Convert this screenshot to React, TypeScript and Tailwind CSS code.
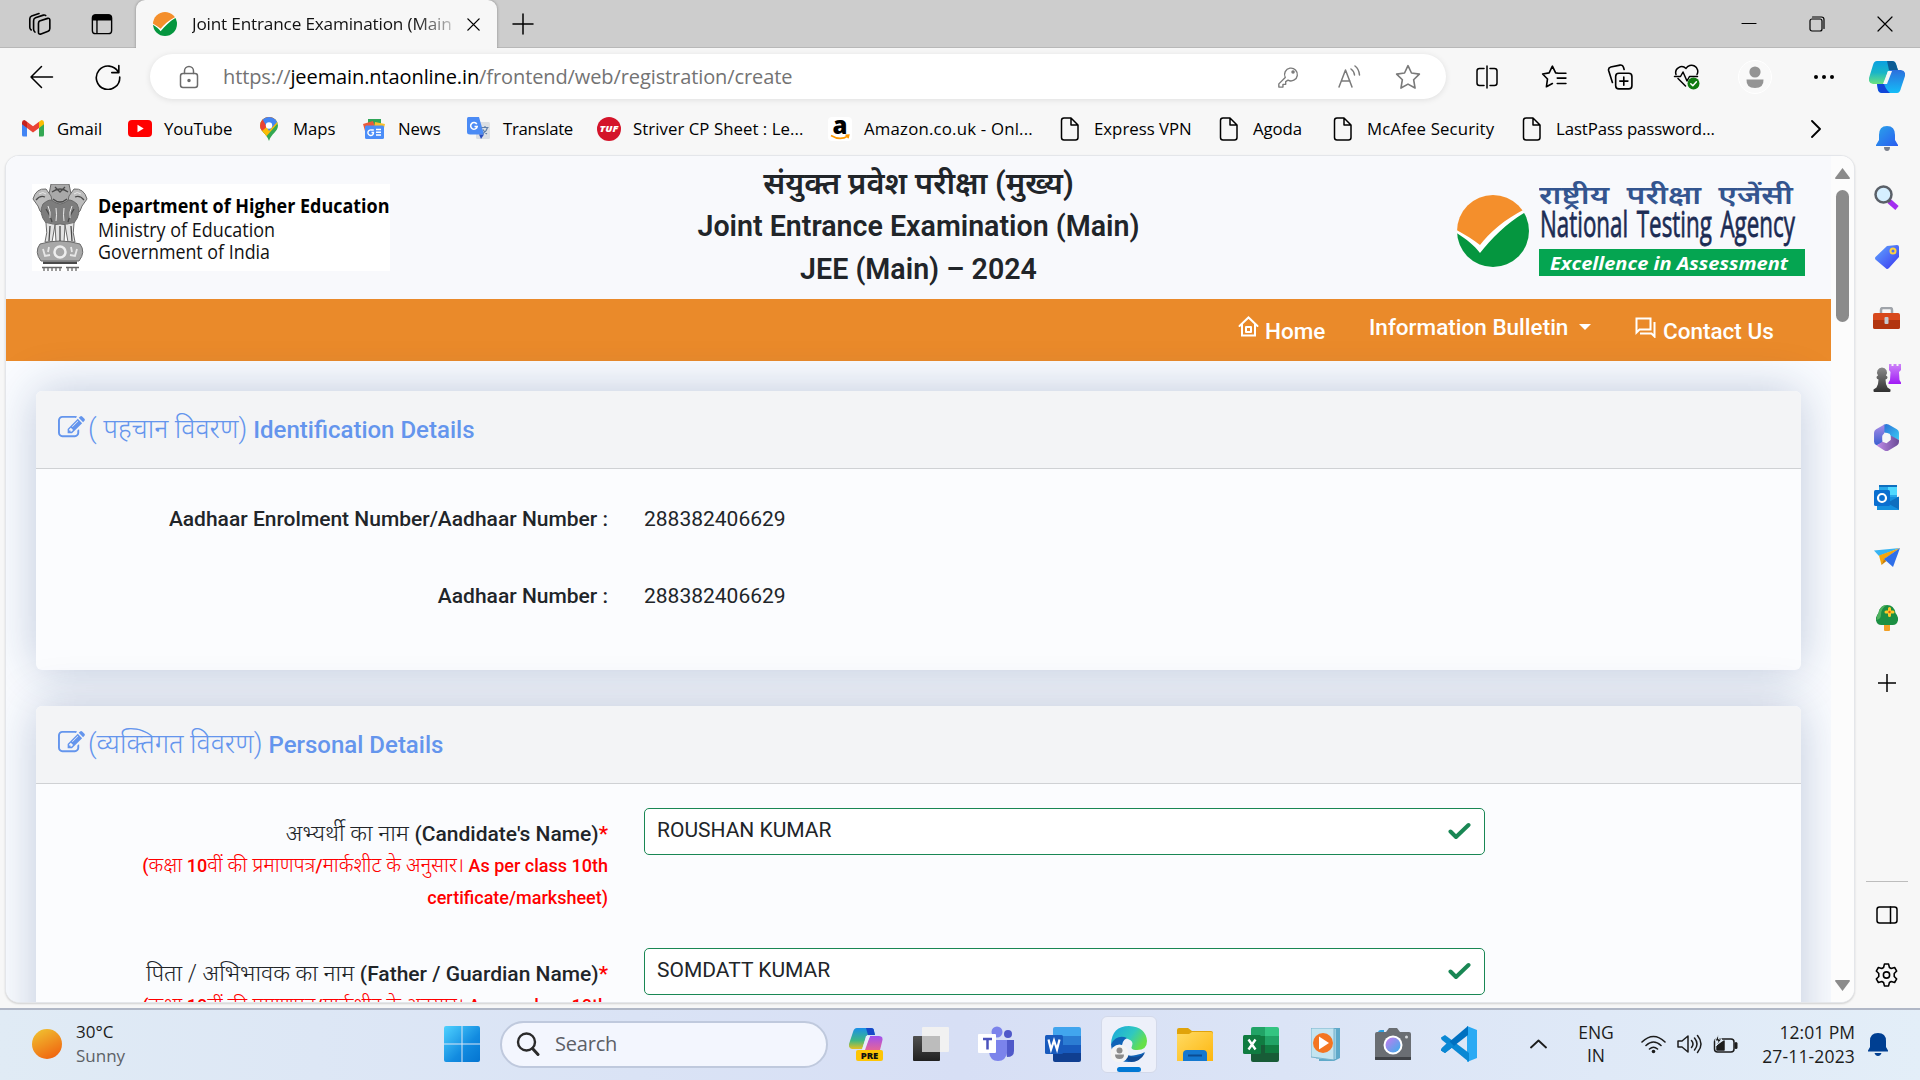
import React from "react";

type IconProps = { w?: number; h?: number; vb?: string; className?: string; children: React.ReactNode };

/* Outline icon: strokes follow the text colour class. */
function Line({ w = 24, h = 24, vb = "0 0 24 24", className = "", children }: IconProps) {
  return (
    <svg width={w} height={h} viewBox={vb} className={"shrink-0 " + className} fill="none" stroke="currentColor" strokeWidth="1.5" strokeLinecap="round" strokeLinejoin="round">
      {children}
    </svg>
  );
}

/* Multi-colour icon. */
function Art({ w = 24, h = 24, vb = "0 0 24 24", className = "", children }: IconProps) {
  return (
    <svg width={w} height={h} viewBox={vb} className={"shrink-0 " + className}>
      {children}
    </svg>
  );
}

function Cell({ className, children }: { className: string; children: React.ReactNode }) {
  return <div className={"flex shrink-0 items-center justify-center " + className}>{children}</div>;
}

function NtaMark({ size }: { size: number }) {
  return (
    <Art w={size} h={size} vb="0 0 72 72">
      <clipPath id="ntaClip"><circle cx="36" cy="36" r="36" /></clipPath>
      <g clipPath="url(#ntaClip)">
        <rect width="72" height="72" fill="#fff" />
        <path d="M-2 34C8 40 16 44 23 50C32 38 48 24 68 14L60 -2H-2Z" fill="#f48f2c" />
        <path d="M-2 37C8 43 17 50 23 58C34 44 50 28 67 18L80 20V76H-2Z" fill="#05963f" />
      </g>
    </Art>
  );
}

function TabStrip() {
  return (
    <div className="flex h-12 shrink-0 bg-[#cdcdcd] shadow-[inset_0_-1px_0_#b8b8b8]">
      <Cell className="w-[78px]">
        <Line w={26} h={26} className="text-black">
          <path d="M12.500 9.200l7.500-2.400q2-.4 2 1.600v7.800q0 1.800-1.600 2.400l-6.500 2.600q-2.400.7-2.400-1.600v-8q0-1.800 1-2.400z" />
          <path d="M8.300 19.500q-1.300-.8-1.300-2.600V9q0-2 1.700-2.700L16 3.800q1.400-.4 2.200.4" />
          <path d="M4.800 17.500q-1.300-.8-1.300-2.600V7.300q0-2 1.700-2.700L12 2.300" />
        </Line>
      </Cell>
      <Cell className="w-[48px]">
        <Line w={22} h={22} className="text-black">
          <rect x="1.500" y="2" width="21" height="20.500" rx="3.500" />
          <path d="M2 4q1-2 3-2h14q2 0 3 2v3.500H2z" fill="currentColor" />
          <path d="M6.500 8v14" />
        </Line>
      </Cell>
      <div className="ml-[10px] flex h-12 w-[361px] items-center rounded-t-[9px] bg-[#f7f7f7] pl-[17px] shadow-[0_0_3px_rgba(0,0,0,0.35)] [clip-path:inset(0_-4px_0_-4px)]">
        <NtaMark size={24} />
        <div className="ml-[15px] w-[262px] whitespace-nowrap bg-linear-to-r from-[#111] from-85% to-[#11111130] bg-clip-text font-['Open_Sans'] text-[17.2px] tracking-[-0.18px] text-transparent">
          Joint Entrance Examination (Main
        </div>
        <Line w={15} h={15} vb="0 0 16 16" className="ml-[12px] text-black"><path d="M2 2l12 12M14 2L2 14" /></Line>
      </div>
      <Cell className="ml-[12px] w-[28px]">
        <Line w={22} h={22} vb="0 0 22 22" className="text-black"><path d="M11 1v20M1 11h20" /></Line>
      </Cell>
      <div className="flex-1" />
      <Cell className="w-[68px]"><Line w={16} h={16} vb="0 0 16 16" className="text-black"><path d="M1 7.500h14" strokeWidth="1.200" /></Line></Cell>
      <Cell className="w-[68px]">
        <Line w={16} h={16} vb="0 0 16 16" className="text-black"><rect x="1" y="3" width="12" height="12" rx="2" strokeWidth="1.200" /><path d="M3.500 1h9q2.500 0 2.500 2.500v9" strokeWidth="1.200" /></Line>
      </Cell>
      <Cell className="mr-[1px] w-[68px]"><Line w={16} h={16} vb="0 0 16 16" className="text-black"><path d="M1 1l14 14M15 1L1 15" strokeWidth="1.200" /></Line></Cell>
    </div>
  );
}

function CopilotIcon() {
  return (
    <Art w={36} h={34} vb="0 0 36 34">
      <defs>
        <linearGradient id="cpA" x1="0" y1="0" x2="0" y2="1"><stop offset="0" stopColor="#0aa0e0" /><stop offset="0.5" stopColor="#19b5c8" /><stop offset="1" stopColor="#6be27e" /></linearGradient>
        <linearGradient id="cpB" x1="0" y1="0" x2="0" y2="1"><stop offset="0" stopColor="#2c6fdc" /><stop offset="1" stopColor="#14bdf8" /></linearGradient>
      </defs>
      <path d="M8 1h15q3 0 4 3l2 7h-6l-4 0-4 13H4q-5-1-4-6L4 5q1-4 4-4z" fill="url(#cpA)" />
      <path d="M18 1h5q3 0 4 3l2 6h-9z" fill="#0d5c94" />
      <path d="M28 33H13q-3 0-4-3l-1-6h9l4-14h11q5 1 4 6l-4 12q-1 5-4 5z" fill="url(#cpB)" />
      <path d="M18 33h-5q-3 0-4-3l-1-6h7q2 6 6 9z" fill="#1246d8" />
      <path d="M19 11h4l-5 13h-4z" fill="#f7f7f7" />
    </Art>
  );
}

function Toolbar() {
  return (
    <div className="flex h-[58px] shrink-0 items-center bg-[#f7f7f7] pb-[1px]">
      <Cell className="ml-[17px] w-[49px]"><Line w={25} h={24} className="text-black"><path d="M23 12H1.500M12 1.500L1.500 12 12 22.500" /></Line></Cell>
      <Cell className="ml-[17px] w-[50px]"><Line w={26} h={26} className="text-black"><path d="M21.500 7.500A10.800 10.800 0 1 0 22.800 12M22 1.500V8h-6.500" /></Line></Cell>
      <div className="ml-[17px] flex h-[45px] w-[1296px] items-center rounded-full bg-white shadow-[0_1px_6px_rgba(0,0,0,0.10)]">
        <Cell className="ml-[26px] w-[26px]">
          <Line w={20} h={24} vb="0 0 20 24" className="text-[#6b6b6b]"><rect x="1.500" y="8.500" width="17" height="14" rx="2.500" /><path d="M5.500 8.500V6a4.500 4.500 0 0 1 9 0v2.500" /><circle cx="10" cy="15.500" r="1" fill="currentColor" /></Line>
        </Cell>
        <div className="ml-[21px] flex-1 whitespace-nowrap font-['Open_Sans'] text-[20px] tracking-[-0.1px] text-[#737373]">
          https://<span className="text-black">jeemain.ntaonline.in</span>/frontend/web/registration/create
        </div>
        <div className="flex w-[202px] text-[#7a7a7a]">
          <Cell className="ml-[31px] w-[26px]"><Line w={22} h={22}><path d="M9 12.500L2 19.500v3.500h4.500v-3h3v-3l2.500-1.500A7 7 0 1 0 9 12.500z" /><circle cx="17.500" cy="6.500" r="1.200" fill="currentColor" /></Line></Cell>
          <Cell className="ml-[34px] w-[28px]"><Line w={24} h={24}><path d="M2 22L8.500 5 15 22M4.500 16h8.500M14 4q3 2 3.500 6M18 1q4 3 4.500 9" /></Line></Cell>
          <Cell className="ml-[32px] w-[26px]"><Line w={26} h={26}><path d="M12 1.500l3.200 6.800 7.300 1-5.300 5.200 1.300 7.700L12 18.600l-6.500 3.600 1.300-7.700L1.500 9.300l7.300-1z" /></Line></Cell>
        </div>
      </div>
      <Cell className="ml-[27px] w-[28px] text-black"><Line w={24} h={24}><path d="M9 3.500H4.500q-2.500 0-2.500 2.500v12q0 2.500 2.500 2.500H9M15 3.500h4.500q2.500 0 2.500 2.500v12q0 2.500-2.500 2.500H15M12 1v22" /></Line></Cell>
      <Cell className="ml-[39px] w-[28px] text-black"><Line w={26} h={26}><path d="M16 8.500l-2.500-.3L10.500 2 7.500 8.200l-6 1 4.500 4.600L5 21l5.500-3M16 8.500h7M15 13h8M15 18h8" /></Line></Cell>
      <Cell className="ml-[38px] w-[28px] text-black"><Line w={26} h={26}><rect x="8" y="8.500" width="15" height="14.500" rx="3" /><path d="M15.500 12v7.500M11.800 15.800h7.500M5 17L1.500 6q-.5-2.500 2-3.200L12 1q2.500-.5 3.200 2l.6 2" /></Line></Cell>
      <Cell className="ml-[38px] w-[28px] text-black">
        <Line w={27} h={26} vb="0 0 27 26"><path d="M3 10.500A6 6 0 0 1 13 4.500a6 6 0 0 1 11 6M12.500 22L5 14.500M1.500 12.500h6l2.500-4.500 4 9 2.500-4.500h8" /><circle cx="20.500" cy="19.500" r="6" fill="#0f7b0f" stroke="none" /><path d="M17.800 19.800l2 1.900 3.600-4" stroke="#fff" /></Line>
      </Cell>
      <Cell className="ml-[38px] w-[34px]">
        <Art w={34} h={34} vb="0 0 34 34"><circle cx="17" cy="17" r="16.500" fill="#f9f9f9" stroke="#fff" /><circle cx="17" cy="12" r="5.600" fill="#949494" /><path d="M8.500 19.500h17q.500 8.500-8.500 8.500t-8.500-8.500z" fill="#949494" /></Art>
      </Cell>
      <Cell className="ml-[40px] w-[24px]"><Art w={22} h={6} vb="0 0 22 6"><circle cx="3" cy="3" r="2" /><circle cx="11" cy="3" r="2" /><circle cx="19" cy="3" r="2" /></Art></Cell>
      <Cell className="ml-[33px] w-[36px]"><CopilotIcon /></Cell>
    </div>
  );
}

const doc = (
  <Line w={20} h={24} vb="0 0 20 24" className="text-black"><path d="M4 1h7l7 7v12.500q0 2.500-2.500 2.500H4q-2.500 0-2.500-2.500v-17Q1.500 1 4 1zM11 1.500V8h6.500" /></Line>
);
const gmail = (
  <Art w={22} h={17} vb="0 0 22 17"><path d="M0 2.500V15q0 1.500 1.500 1.500H5v-9z" fill="#4285f4" /><path d="M22 2.500V15q0 1.500-1.500 1.500H17v-9z" fill="#34a853" /><path d="M5 1.800V8l6 4.500L17 8V1.800L11 6.200z" fill="#ea4335" /><path d="M0 2.500Q0 0 2.200 0 3 0 5 1.800V8L0 4.200z" fill="#c5221f" /><path d="M22 2.500Q22 0 19.800 0 19 0 17 1.800V8l5-3.800z" fill="#fbbc04" /></Art>
);
const youtube = (
  <Art w={24} h={17} vb="0 0 24 17"><rect width="24" height="17" rx="4" fill="#f00" /><path d="M9.500 4.800v7.400l6.200-3.700z" fill="#fff" /></Art>
);
const maps = (
  <Art w={18} h={24} vb="0 0 18 24">
    <clipPath id="pin"><path d="M9 0a9 8.600 0 0 1 9 8.600c0 6-6.500 8-9 15.400C6.500 16.600 0 14.600 0 8.600A9 8.600 0 0 1 9 0z" /></clipPath>
    <g clipPath="url(#pin)"><rect width="18" height="24" fill="#34a853" /><path d="M18 6L4 22-4 14V0h22z" fill="#fbbc04" /><path d="M0 0h18L2 14-2 12z" fill="#ea4335" /><path d="M2 0h16v4L9 14 3.500 4z" fill="#4285f4" /></g>
    <circle cx="9" cy="8.500" r="3.200" fill="#fff" />
  </Art>
);
const news = (
  <Art w={23} h={20} vb="0 0 23 20"><path d="M5 0h13v8H5z" fill="#2fa557" /><path d="M0 5l10-3 2 6-10 4z" fill="#ea5b3a" /><path d="M12 3l10 2-2 8-9-3z" fill="#fbc02d" /><rect x="2" y="6.500" width="19" height="13.500" rx="1.500" fill="#4b8df8" /><path d="M10.800 11H8.500A2.800 2.800 0 1 0 10.500 13.500H8.500" stroke="#fff" fill="none" strokeWidth="1.400" /><path d="M13 10.500h5M13 13.200h5M13 16h5" stroke="#fff" strokeWidth="1.400" /></Art>
);
const translate = (
  <Art w={24} h={24}><rect x="9" y="5" width="14" height="17" rx="1.500" fill="#dcdfe3" /><path d="M1.500 0H12l5 17.500H3Q0 17.500 0 15V1.500Q0 0 1.500 0z" fill="#4b8bf5" /><path d="M12 17.500h5l-3 4.500z" fill="#2a4fbf" /><path d="M9.800 7.200A3.300 3.300 0 1 0 10.200 9.500H7.500" stroke="#fff" fill="none" strokeWidth="1.500" /><path d="M14.500 10.500h7M18 9v1.500M20.500 10.500q-1 4-4.500 6M16 12.500q1.500 3 4 4.500" stroke="#5f7ea8" fill="none" strokeWidth="1.200" /></Art>
);
const tuf = (
  <Art w={24} h={24}><circle cx="12" cy="12" r="12" fill="#d4142a" /><text x="12" y="15" textAnchor="middle" textLength="19" lengthAdjust="spacingAndGlyphs" fontFamily="Open Sans" fontStyle="italic" fontWeight="800" fontSize="8" fill="#fff">TUF</text></Art>
);
const amazon = (
  <Art w={24} h={24}><rect width="24" height="24" rx="4" fill="#fff" /><text x="12" y="16.500" textAnchor="middle" fontFamily="Open Sans" fontWeight="800" fontSize="24" fill="#000">a</text><path d="M3 18.500q9 5.500 17 .5M17.500 18.300l3.300-.3-.8 3.200" stroke="#f90" strokeWidth="1.500" fill="none" /></Art>
);

function Bookmark({ className, icon, children }: { className: string; icon: React.ReactNode; children: React.ReactNode }) {
  return (
    <div className={"flex shrink-0 items-center " + className}>
      <Cell className="w-6">{icon}</Cell>
      <span className="ml-3 whitespace-nowrap">{children}</span>
    </div>
  );
}

function Bookmarks() {
  return (
    <div className="flex h-[49px] shrink-0 items-center pb-[4px] pl-[21px] font-['Open_Sans'] text-[16.8px] tracking-[-0.1px] text-black">
      <Bookmark className="w-[107px]" icon={gmail}>Gmail</Bookmark>
      <Bookmark className="w-[129px]" icon={youtube}>YouTube</Bookmark>
      <Bookmark className="w-[105px]" icon={maps}>Maps</Bookmark>
      <Bookmark className="w-[105px]" icon={news}>News</Bookmark>
      <Bookmark className="w-[130px] tracking-[-0.3px]" icon={translate}>Translate</Bookmark>
      <Bookmark className="w-[231px] tracking-[0.05px]" icon={tuf}>Striver CP Sheet : Le...</Bookmark>
      <Bookmark className="w-[230px] tracking-[0.2px]" icon={amazon}>Amazon.co.uk - Onl...</Bookmark>
      <Bookmark className="w-[159px] tracking-normal" icon={doc}>Express VPN</Bookmark>
      <Bookmark className="w-[114px]" icon={doc}>Agoda</Bookmark>
      <Bookmark className="w-[189px] tracking-[0.15px]" icon={doc}>McAfee Security</Bookmark>
      <Bookmark className="w-[287px]" icon={doc}>LastPass password...</Bookmark>
      <Line w={18} h={18} vb="0 0 18 18" className="text-black"><path d="M5 1l8 8-8 8" strokeWidth="1.800" /></Line>
    </div>
  );
}

function DepartmentLogo() {
  return (
    <svg width="358" height="87" viewBox="0 0 358 87" className="shrink-0">
      <rect width="358" height="87" fill="#fff" />
      <g stroke="#6a6a6a" strokeWidth="1">
        <path d="M19 0h18l2 10-3 9H20l-3-9z" fill="#a9a9a9" />
        <path d="M1 15Q4 4 14 5l5 7 2 10-6 11-7-6-2-5z" fill="#bdbdbd" />
        <path d="M55 15Q52 4 42 5l-5 7-2 10 6 11 7-6 2-5z" fill="#bdbdbd" />
        <path d="M11 20Q18 14 21 17q7 6 14 0 3-3 10 3 5 9-3 19-8 3-14 1-6 2-14-1-8-10-3-19z" fill="#7d7d7d" />
        <path d="M14 39q2 10-1 19h7l3-17M23 41l1 17h8l1-17M33 41l3 17h7q-3-9-1-19" fill="#e3e3e3" />
        <path d="M8 60q20-6 40 0 6 8-1 17H9Q2 68 8 60z" fill="#a8a8a8" />
      </g>
      <path d="M20 8q8-6 16 0M21 15q7 6 14 0M23 3l5 5 5-5M4 16q4-5 9-3M52 16q-4-5-9-3M14 25q5 8 6 13M42 25q-5 8-6 13M28 42v15M18 42l-1 15M39 42l1 15" stroke="#4a4a4a" fill="none" strokeWidth="1.300" />
      <path d="M7 10q4-3 7 0M49 10q-4-3-7 0M16 22q3 6 2 12M40 22q-3 6-2 12M24 24q1 7 0 13M32 24q-1 7 0 13" stroke="#e8e8e8" fill="none" />
      <circle cx="28" cy="68" r="5.500" fill="none" stroke="#eee" strokeWidth="2.500" />
      <path d="M11 65l2 7 5-1M17 63l-1 5M45 65l-2 7-5-1M39 63l1 5" stroke="#e6e6e6" strokeWidth="1.800" fill="none" />
      <path d="M11 77.500h34v2.500H11z" fill="#4a4a4a" />
      <path d="M10 83.500h20M34 83.500h13M12 84v3M16 84v3M20 84v3M24 84v3M28 84v3M36 84v3M40 84v3M44 84v3" stroke="#666" strokeWidth="1.300" />
      <g fontFamily="Open Sans" fill="#111">
        <text x="66" y="28.500" fontSize="19.800" fontWeight="700" textLength="291.500" lengthAdjust="spacingAndGlyphs" fill="#000">Department of Higher Education</text>
        <text x="66" y="52.500" fontSize="20" textLength="177" lengthAdjust="spacingAndGlyphs">Ministry of Education</text>
        <text x="66" y="75" fontSize="20" textLength="172" lengthAdjust="spacingAndGlyphs">Government of India</text>
      </g>
    </svg>
  );
}

function AgencyLogo() {
  return (
    <div className="flex items-start">
      <div className="mt-[15px]"><NtaMark size={72} /></div>
      <svg width="266" height="96" viewBox="0 0 266 96" className="ml-[10px]">
        <text x="0" y="23.500" fontFamily="Noto Sans, sans-serif" fontSize="25" fontWeight="600" wordSpacing="7" textLength="254" lengthAdjust="spacingAndGlyphs" fill="#34558f">राष्ट्रीय परीक्षा एजेंसी</text>
        <text transform="translate(1 57) scale(1 1.500)" fontFamily="Open Sans, sans-serif" fontSize="24" wordSpacing="3" textLength="255" lengthAdjust="spacingAndGlyphs" fill="#1c2c54" stroke="#1c2c54" strokeWidth="0.500">National Testing Agency</text>
        <rect y="69" width="266" height="27" fill="#05a551" />
        <text x="11" y="90" fontFamily="Open Sans, sans-serif" fontSize="18.500" fontStyle="italic" fontWeight="700" textLength="238" lengthAdjust="spacingAndGlyphs" fill="#fff">Excellence in Assessment</text>
      </svg>
    </div>
  );
}

function SiteHeader() {
  return (
    <div className="flex h-[143px] shrink-0 justify-between bg-[#f8f9fc]">
      <div className="w-[440px] pt-[28px] pl-[26px]"><DepartmentLogo /></div>
      <div className="pt-[6px] text-center text-[28.6px] leading-[43px] font-semibold text-[#212529]">
        <div className="text-[30.9px]">संयुक्त प्रवेश परीक्षा (मुख्य)</div>
        <div>Joint Entrance Examination (Main)</div>
        <div>JEE (Main) – 2024</div>
      </div>
      <div className="w-[440px] pt-[24px] pl-[66px]"><AgencyLogo /></div>
    </div>
  );
}

function NavBar() {
  return (
    <div className="flex h-[62px] shrink-0 bg-[#ea8a2a] text-[22.500px] leading-[28px] font-medium text-white">
      <div className="ml-[1232px] flex w-[131px]">
        <Line w={21} h={21} vb="0 0 21 21" className="mt-[17px]"><path d="M1.500 10L10.500 1.500l9 8.500M4 8.500V19.500h13V8.500" strokeWidth="2" strokeLinejoin="miter" /><rect x="8" y="11" width="5" height="5" strokeWidth="2" /></Line>
        <span className="mt-[18px] ml-[6px]">Home</span>
      </div>
      <div className="flex w-[266px]">
        <span className="mt-[14px] whitespace-nowrap">Information Bulletin</span>
        <Art w={12} h={6} vb="0 0 12 6" className="mt-[25px] ml-[11px]"><path d="M0 0h12L6 6z" fill="#fff" /></Art>
      </div>
      <div className="flex">
        <Line w={21} h={21} vb="0 0 21 21" className="mt-[18px]"><path d="M1.500 1.500h14v11h-11l-3 3zM19.500 5v14.500l-3-3H5" strokeWidth="2" strokeLinejoin="miter" strokeLinecap="butt" /></Line>
        <span className="mt-[18px] ml-[7px] whitespace-nowrap">Contact Us</span>
      </div>
    </div>
  );
}

function EditIcon() {
  return (
    <Art w={27} h={27} vb="0 0 1792 1792" className="mr-[3px] mb-[3px]">
      <path
        fill="#6495ed"
        d="M888 1184l116-116-152-152-116 116v56h96v96h56zm440-720q-16-16-33 1l-350 350q-17 17-1 33t33-1l350-350q17-17 1-33zm80 594v190q0 119-84.500 203.500t-203.500 84.500h-832q-119 0-203.500-84.500t-84.500-203.500v-832q0-119 84.500-203.500t203.500-84.500h832q63 0 117 25 15 7 18 23 3 17-9 29l-49 49q-14 14-32 8-23-6-45-6h-832q-66 0-113 47t-47 113v832q0 66 47 113t113 47h832q66 0 113-47t47-113v-126q0-13 9-22l64-64q15-15 35-7t20 29zm-96-738l288 288-672 672h-288v-288zm444 132l-92 92-288-288 92-92q28-28 68-28t68 28l152 152q28 28 28 68t-28 68z"
      />
    </Art>
  );
}

function Card({ hindi, title, className, children }: { hindi: string; title: string; className: string; children: React.ReactNode }) {
  return (
    <div className={"mx-[30px] shrink-0 rounded-[6px] bg-[#fbfcfe] shadow-[0_0_48px_rgba(25,55,115,0.26)] " + className}>
      <div className="flex h-[78px] items-center rounded-t-[6px] border-b border-[#cfd1d4] bg-[#f3f4f6] pb-[1px] pl-[22px] text-[24px] leading-[32px] font-medium text-[#6495ed]">
        <EditIcon />
        <span className="whitespace-pre"><span className="text-[26.9px] font-light">{hindi}</span> {title}</span>
      </div>
      {children}
    </div>
  );
}

function StaticRow({ label, value, className }: { label: string; value: string; className: string }) {
  return (
    <div className={"flex text-[21px] leading-[32px] text-[#212529] " + className}>
      <div className="w-[572px] text-right font-medium">{label}</div>
      <div className="ml-[36px]">{value}</div>
    </div>
  );
}

function FieldRow({ hindi, english, value }: { hindi: string; english: string; value: string }) {
  return (
    <div className="flex h-[140px] items-start">
      <div className="w-[572px] pt-[9px] text-right font-medium text-[#212529]">
        <div className="h-[33px] text-[21px] leading-[33px] whitespace-nowrap">
          <span className="text-[23.100px] font-light">{hindi}</span>{english}<span className="text-[#f00]">*</span>
        </div>
        <div className="text-[18px] leading-[31px] text-[#f00]">
          <div className="h-[32px] whitespace-nowrap">(<span className="text-[20.300px] font-light">कक्षा</span> 10<span className="text-[20.300px] font-light">वीं की प्रमाणपत्र</span>/<span className="text-[20.300px] font-light">मार्कशीट के अनुसार।</span> As per class 10th</div>
          <div>certificate/marksheet)</div>
        </div>
      </div>
      <div className="ml-[36px] flex h-[47px] w-[841px] items-center justify-between rounded-[5px] border border-[#198754] bg-white pr-[13px] pb-[1px] pl-[12px] text-[21px] text-[#212529]">
        {value}
        <Art w={23} h={18} vb="0 0 23 18"><path d="M2.500 9.500l5.500 5.500L20.500 3" stroke="#198754" strokeWidth="4" fill="none" strokeLinecap="round" strokeLinejoin="round" /></Art>
      </div>
    </div>
  );
}

function WebPage() {
  return (
    <div className="flex h-full w-[1825px] shrink-0 flex-col overflow-hidden bg-[#fafcff] font-['Roboto','Noto_Sans',sans-serif]">
      <SiteHeader />
      <NavBar />
      <Card className="mt-[30px] h-[279px]" hindi="( पहचान विवरण)" title="Identification Details">
        <StaticRow className="pt-[34px]" label="Aadhaar Enrolment Number/Aadhaar Number :" value="288382406629" />
        <StaticRow className="pt-[45px]" label="Aadhaar Number :" value="288382406629" />
      </Card>
      <Card className="mt-[36px] h-[500px]" hindi="(व्यक्तिगत विवरण)" title="Personal Details">
        <div className="pt-[24px]">
          <FieldRow hindi="अभ्यर्थी का नाम " english="(Candidate's Name)" value="ROUSHAN KUMAR" />
          <FieldRow hindi="पिता / अभिभावक का नाम " english="(Father / Guardian Name)" value="SOMDATT KUMAR" />
        </div>
      </Card>
    </div>
  );
}

function Scrollbar() {
  return (
    <div className="flex w-[23px] flex-col items-center bg-[#fcfcfc]">
      <Art w={15} h={11} vb="0 0 15 11" className="mt-[12px]"><path d="M7.500 0L15 10q0 1-1 1H1q-1 0-1-1z" fill="#8b8b8b" /></Art>
      <div className="mt-[11px] h-[132px] w-[13px] rounded-full bg-[#8b8b8b]" />
      <Art w={15} h={11} vb="0 0 15 11" className="mt-auto mb-[11px]"><path d="M7.500 11L0 1Q0 0 1 0h13q1 0 1 1z" fill="#8b8b8b" /></Art>
    </div>
  );
}

function SideBar() {
  return (
    <div className="flex w-[68px] shrink-0 flex-col items-center pl-px">
      <Cell className="mt-[15px] h-[34px]">
        <Art w={22} h={25} vb="0 0 22 25"><defs><linearGradient id="bell" x1="0" y1="0" x2="1" y2="1"><stop stopColor="#2aa5ea" /><stop offset="1" stopColor="#2a5cf0" /></linearGradient></defs><path d="M8 21h6q0 4-3 4t-3-4z" fill="#7a7f8c" /><path d="M11 0q8 0 8 9v5l3 5v1H0v-1l3-5V9q0-9 8-9z" fill="url(#bell)" /></Art>
      </Cell>
      <Cell className="mt-[25px] h-[34px]">
        <Art w={25} h={25} vb="0 0 25 25"><path d="M15 16l8 7" stroke="#a32df0" strokeWidth="5" /><path d="M13 14l3 3" stroke="#666" strokeWidth="3" /><circle cx="9.500" cy="9.500" r="8" fill="#d5efff" stroke="#5a6068" strokeWidth="2.500" /></Art>
      </Cell>
      <Cell className="mt-[26px] h-[34px]">
        <Art w={24} h={24}><defs><linearGradient id="tag" x1="0" y1="0" x2="1" y2="1"><stop stopColor="#61a9ff" /><stop offset="1" stopColor="#3a35ef" /></linearGradient></defs><path d="M12 1L22 0q2 0 2 2v10L14 23q-2 2-3.500 0L1 15q-2-2 0-3.500z" fill="url(#tag)" /><circle cx="18" cy="6" r="2.500" fill="none" stroke="#ffd23e" strokeWidth="2" /></Art>
      </Cell>
      <Cell className="mt-[27px] h-[34px]">
        <Art w={27} h={22} vb="0 0 27 22"><path d="M8 6V3q0-2 2-2h7q2 0 2 2v3" stroke="#a0a4aa" strokeWidth="2.500" fill="none" /><rect y="6" width="27" height="16" rx="2" fill="#d8491c" /><path d="M0 13h27v7q0 2-2 2H2q-2 0-2-2z" fill="#b2350f" /><rect x="11.500" y="10" width="4" height="7" rx="1" fill="#c5cad0" /></Art>
      </Cell>
      <Cell className="mt-[26px] h-[34px]">
        <Art w={28} h={28} vb="0 0 28 28">
          <defs><linearGradient id="rook" x1="0" y1="0" x2="0" y2="1"><stop stopColor="#cd84f8" /><stop offset="1" stopColor="#a01af5" /></linearGradient><linearGradient id="pawn" x1="0" y1="0" x2="0" y2="1"><stop stopColor="#8a8a8a" /><stop offset="1" stopColor="#303030" /></linearGradient></defs>
          <path d="M16 0h2.500v2h2V0h3v2h2V0H28v6l-2 2 .5 8 1.500 2.500V20H15.500v-1.500L17 16l.5-8-1.500-2z" fill="url(#rook)" />
          <path d="M9 3.500a5 5 0 0 1 4 8q1.500.5 1.500 2t-2 2q0 5 2 8l3 2v1.500q0 1-1 1h-15q-1 0-1-1V25.500l3-2q2-3 2-8-2-.5-2-2t1.500-2a5 5 0 0 1 4-8z" fill="url(#pawn)" />
        </Art>
      </Cell>
      <Cell className="mt-[25px] h-[34px]">
        <Art w={25} h={27} vb="0 0 24 26">
          <defs><linearGradient id="m3a" x1="0" y1="0" x2="1" y2="1"><stop stopColor="#2a6fd6" /><stop offset="1" stopColor="#3bcbf5" /></linearGradient><linearGradient id="m3b" x1="0" y1="0" x2="0" y2="1"><stop stopColor="#a98be6" /><stop offset="1" stopColor="#3a5fd0" /></linearGradient><linearGradient id="m3c" x1="0" y1="0" x2="1" y2="0"><stop stopColor="#c08be8" /><stop offset="1" stopColor="#6a4a96" /></linearGradient></defs>
          <path d="M10 .5q2-1 4 0l8 4.600q2 1.200 2 3.400v7L16 12l-1-2.500-6-1.500V1z" fill="url(#m3a)" />
          <path d="M2 5l8-4.500v8L8 12v6l-5.500 2.500Q0 19.500 0 17V8.500Q0 6.200 2 5z" fill="url(#m3b)" />
          <path d="M2.500 20.700L8 17l4 1.500 4-3V11l8 4.500v1.800q0 2.200-2 3.400l-8 4.700q-2 1-4 0z" fill="url(#m3c)" />
          <path d="M12 8.500l3.800 2.200v4.500L12 17.400l-3.800-2.200v-4.500z" fill="#f7f7f7" />
        </Art>
      </Cell>
      <Cell className="mt-[26px] h-[34px]">
        <Art w={25} h={25} vb="0 0 25 25"><rect x="5" y="0" width="18" height="14" fill="#28a8ea" /><path d="M14 2h9v8h-9z" fill="#50d9ff" /><path d="M5 0h18v2H5z" fill="#0f6fbf" /><path d="M3 12h22v13H3z" fill="#1490df" /><path d="M25 11.500L13 18l12 6.500z" fill="#0f6fbf" /><rect x="0" y="5" width="16" height="16" rx="1.500" fill="#0a6fd0" /><circle cx="8" cy="13" r="4" fill="none" stroke="#fff" strokeWidth="2.200" /></Art>
      </Cell>
      <Cell className="mt-[26px] h-[34px]">
        <Art w={26} h={19} vb="0 0 26 19"><path d="M0 2.500L26 0 5 8z" fill="#38b4f2" /><path d="M26 0L5 7.500l2.500 9.500 3-6z" fill="#f5a60c" /><path d="M7.500 17l5-4-2.500-2z" fill="#c97f06" /><path d="M26 0L10 11l9 8z" fill="#2f6fe8" /></Art>
      </Cell>
      <Cell className="mt-[27px] h-[34px]">
        <Art w={22} h={26} vb="0 0 22 26"><rect x="8" y="17" width="6" height="9" rx="1" fill="#f2a026" /><path d="M11 0q7 0 8.500 8 3.500 4 2.300 8-1 4-5 4H5.200q-4 0-5-4-1.200-4 2.300-8Q4 0 11 0z" fill="#1c8f43" /><path d="M11 0Q5 3 5 10q0 4-4.500 5 0-4 2-7Q4 0 11 0z" fill="#4fb35f" /><path d="M13.500 3.500v7M10 7h7" stroke="#ffc828" strokeWidth="3" strokeLinecap="round" /><circle cx="13.500" cy="7" r="1.200" fill="#e05a10" /></Art>
      </Cell>
      <Cell className="mt-[31px] h-[34px]"><Line w={18} h={18} vb="0 0 18 18" className="text-black"><path d="M9 0v18M0 9h18" /></Line></Cell>
      <div className="mt-[181px] h-px w-[42px] shrink-0 bg-[#bdbdbd]" />
      <Cell className="mt-[16px] h-[34px]"><Line w={22} h={18} vb="0 0 22 18" className="text-black"><rect x="1" y="1" width="20" height="16" rx="2.500" /><path d="M14.500 1v16" /></Line></Cell>
      <Cell className="mt-[26px] h-[34px]">
        <Line w={25} h={26} className="text-black"><path d="M10 1.500h4l.8 3.300 1.700 1 3.300-1 2 3.400-2.400 2.400v2.800l2.400 2.400-2 3.400-3.300-1-1.700 1-.8 3.300h-4l-.8-3.300-1.700-1-3.300 1-2-3.400 2.400-2.400v-2.800L2.200 8.200l2-3.400 3.300 1 1.700-1z" /><circle cx="12" cy="12" r="3" /></Line>
      </Cell>
    </div>
  );
}

function Taskbar() {
  return (
    <div className="flex h-[72px] shrink-0 items-center border-t-2 border-[#b0b7c6] bg-linear-to-r from-[#e0ebf5] via-[#d7dff5] via-50% to-[#e3eef8] pb-[2px] font-['Open_Sans'] text-[17px] text-[#1c1c1c]">
      <Art w={30} h={30} vb="0 0 30 30" className="ml-[32px]"><defs><linearGradient id="sun" x1="0.200" y1="0" x2="0.700" y2="1"><stop stopColor="#f0c030" /><stop offset="1" stopColor="#f06410" /></linearGradient></defs><circle cx="15" cy="15" r="15" fill="url(#sun)" /></Art>
      <div className="ml-[14px] w-[368px] leading-[24px]"><div>30°C</div><div className="text-[#5c6166]">Sunny</div></div>
      <Art w={36} h={36} vb="0 0 36 36"><defs><linearGradient id="win" x1="0" y1="0" x2="1" y2="1"><stop stopColor="#4fd2ff" /><stop offset="0.600" stopColor="#128be0" /><stop offset="1" stopColor="#0474d0" /></linearGradient></defs><path d="M2 0H17.500V17.500H0V2Q0 0 2 0zM18.500 0H34q2 0 2 2v15.500H18.500zM0 18.500h17.500V36H2q-2 0-2-2zM18.500 18.500H36V34q0 2-2 2H18.500z" fill="url(#win)" /></Art>
      <div className="ml-[20px] flex h-[47px] w-[328px] items-center rounded-full border-2 border-[#bfc9dd] bg-[#f3f6fe]">
        <Line w={24} h={24} className="ml-[14px] text-[#2a2a2a]"><circle cx="10.500" cy="10" r="8.500" strokeWidth="2.400" /><path d="M16.500 16.500l5.500 6" strokeWidth="3" /></Line>
        <span className="ml-[15px] text-[20px] tracking-[-0.200px] text-[#5c5f66]">Search</span>
      </div>
      <Cell className="ml-[13px] w-[50px]">
        <Art w={35} h={34} vb="0 0 35 34"><defs><linearGradient id="preA" x1="0" y1="0" x2="0" y2="1"><stop stopColor="#1a8fe8" /><stop offset="0.600" stopColor="#3fb884" /><stop offset="1" stopColor="#e8c020" /></linearGradient><linearGradient id="preB" x1="0" y1="0" x2="0" y2="1"><stop stopColor="#a050f0" /><stop offset="1" stopColor="#f86a80" /></linearGradient></defs><path d="M8 1h14q3 0 3 3l1 4h-8l-5 14H5q-6 0-5-5L4 5q1-4 4-4z" fill="url(#preA)" /><path d="M17 1h5q3 0 3 3l1 4h-7z" fill="#1848c8" /><path d="M21 9h9q5 0 3 6l-3 12H13z" fill="url(#preB)" /><path d="M17 9h4l-5 14h-3z" fill="#e8ecfa" /><rect x="7" y="23" width="27" height="11" rx="2" fill="#fdc506" /><text x="20.500" y="32" textAnchor="middle" fontFamily="Open Sans" fontWeight="800" fontSize="9.500" fill="#111">PRE</text></Art>
      </Cell>
      <Cell className="ml-[15px] w-[50px]">
        <Art w={36} h={34} vb="0 0 36 34"><defs><linearGradient id="tv" x1="0" y1="0" x2="0" y2="1"><stop stopColor="#505050" /><stop offset="1" stopColor="#202020" /></linearGradient></defs><rect y="9" width="27" height="25" rx="1" fill="url(#tv)" /><rect x="9" y="0" width="27" height="25" rx="1" fill="#f1f1f1" /><path d="M9 9h18v16H9z" fill="#bcbcbc" /></Art>
      </Cell>
      <Cell className="ml-[15px] w-[50px]">
        <Art w={36} h={36} vb="0 0 36 36"><circle cx="30" cy="8" r="4" fill="#5059c9" /><path d="M26 14h10v11q0 6-7 6z" fill="#5059c9" /><circle cx="19" cy="6" r="5.500" fill="#7b83eb" /><path d="M11 14h18v12q-1 9-9 9t-9-9z" fill="#7b83eb" /><rect y="8" width="18" height="19" rx="1" fill="#fff" /><path d="M5 13h9M9.500 13v10.500" stroke="#4b53bc" strokeWidth="2.500" /></Art>
      </Cell>
      <Cell className="ml-[17px] w-[50px]">
        <Art w={36} h={35} vb="0 0 36 35"><path d="M8 2q0-2 2-2h24q2 0 2 2v7H8z" fill="#41a5ee" /><path d="M8 9h28v9H8z" fill="#2b7cd3" /><path d="M8 18h28v8H8z" fill="#185abd" /><path d="M8 26h28v7q0 2-2 2H10q-2 0-2-2z" fill="#103f91" /><rect y="8" width="18" height="19" rx="1.500" fill="#185abd" /><path d="M3.500 12.500l2.500 10 3-9 3 9 2.500-10" stroke="#fff" strokeWidth="2.200" fill="none" /></Art>
      </Cell>
      <div className="ml-[13px] flex h-[57px] w-[56px] shrink-0 flex-col items-center rounded-[6px] border border-[#d3d9ea] bg-[#edf0fa]">
        <Art w={36} h={36} vb="0 0 36 36" className="mt-[9px]"><defs><linearGradient id="edA" x1="0" y1="0" x2="1" y2="0.500"><stop stopColor="#18a4e0" /><stop offset="0.600" stopColor="#30c8c0" /><stop offset="1" stopColor="#66e048" /></linearGradient></defs><path d="M0 18Q1 0 18 0q17 1 18 15 0 10-12 9-5-1-3-4 2-5-4-7Q7 9 0 18z" fill="url(#edA)" /><path d="M0 18Q6 8 16 12q-6 3-5 11 3 9 14 6 6-1 9-3-5 10-16 10Q1 36 0 18z" fill="#0f63b8" /><path d="M11 22q1 9 12 9 6 0 11-4-5 9-14 9-8-2-9-14z" fill="#114a94" /><circle cx="8.500" cy="27.500" r="9" fill="#f4f4f4" /><circle cx="8.500" cy="24.500" r="3" fill="#8c8c8c" /><path d="M4 28.500h9q0 4.500-4.500 4.500T4 28.500z" fill="#8c8c8c" /></Art>
        <div className="mt-auto h-[5px] w-[24px] rounded-full bg-[#0078d4]" />
      </div>
      <Cell className="ml-[13px] w-[50px]">
        <Art w={36} h={33} vb="0 0 36 33"><defs><linearGradient id="fol" x1="0" y1="0" x2="1" y2="1"><stop stopColor="#ffdb63" /><stop offset="1" stopColor="#fdb60f" /></linearGradient></defs><path d="M0 2q0-2 2-2h9l4 3h19q2 0 2 2v5H0z" fill="#e0a30a" /><path d="M0 6h12l3-2h19q2 0 2 2v27H0z" fill="url(#fol)" /><path d="M6 33v-7q0-4 4-4h16q4 0 4 4v7z" fill="#1478cf" /><path d="M11 27.500h14" stroke="#0b4c92" strokeWidth="2" /></Art>
      </Cell>
      <Cell className="ml-[16px] w-[50px]">
        <Art w={36} h={35} vb="0 0 36 35"><path d="M8 2q0-2 2-2h12v9H8z" fill="#21a366" /><path d="M22 0h12q2 0 2 2v7H22z" fill="#33c481" /><path d="M8 9h14v9H8z" fill="#107c41" /><path d="M22 9h14v9H22z" fill="#21a366" /><path d="M8 18h28v15q0 2-2 2H10q-2 0-2-2z" fill="#185c37" /><path d="M22 18h14v8H22z" fill="#107c41" /><rect y="8" width="18" height="19" rx="1.500" fill="#107c41" /><path d="M5.500 12.500l7 10M12.500 12.500l-7 10" stroke="#fff" strokeWidth="2.400" /></Art>
      </Cell>
      <Cell className="ml-[15px] w-[50px]">
        <Art w={30} h={33} vb="0 0 30 33"><path d="M8 0h21v30l-6 3H8z" fill="#5fa9c9" /><path d="M5 1h20v30H5z" fill="#9ed0e4" /><path d="M0 0h23v32L0 29z" fill="#c4e4f0" stroke="#78b2cc" /><circle cx="12" cy="15" r="10" fill="#f47521" /><path d="M8 8.500v13l10-6.500z" fill="#fff" /></Art>
      </Cell>
      <Cell className="ml-[17px] w-[50px]">
        <Art w={36} h={32} vb="0 0 36 32"><path d="M3 5q0-3 3-3h3v5H3z" fill="#2aa0e0" /><path d="M2 4h9l3-4h8l3 4h9q2 0 2 2v26H0V6q0-2 2-2z" fill="#6a6e73" /><path d="M0 29h36v2q0 1-1 1H1q-1 0-1-1z" fill="#3f4246" /><circle cx="18" cy="17" r="9.500" fill="#fff" /><defs><linearGradient id="lens" x1="0" y1="0" x2="1" y2="1"><stop stopColor="#c77af0" /><stop offset="1" stopColor="#38b0ea" /></linearGradient></defs><circle cx="18" cy="17" r="7.500" fill="url(#lens)" /><circle cx="31.500" cy="9" r="1.500" fill="#d5d8dc" /></Art>
      </Cell>
      <Cell className="ml-[16px] w-[50px]">
        <Art w={36} h={38} vb="0 0 36 36"><path d="M26 0L36 4v28l-10 4z" fill="#2aaaf4" /><path d="M0 11.500L4 9l24 18v9L1 14q-1-1-1-2.500z" fill="#0a88d4" /><path d="M0 24.500L4 27 27 9V0L1 22q-1 1-1 2.500z" fill="#0070c0" /><path d="M0 24.500L4 27l9-7-5-5-7 7q-1 1-1 2.500z" fill="#0a88d4" /></Art>
      </Cell>
      <div className="flex-1" />
      <Line w={17} h={10} vb="0 0 17 10" className="text-[#1c1c1c]"><path d="M1 8.500l7.500-7 7.500 7" strokeWidth="1.800" /></Line>
      <div className="ml-[29px] w-[40px] text-center text-[17.500px] leading-[23px] tracking-[-0.100px]">ENG<br />IN</div>
      <Line w={25} h={19} vb="0 0 25 19" className="ml-[25px]"><path d="M1 7q11.500-11 23 0M5 10.500q7.500-7 15 0M8.500 14q4-3.500 8 0" strokeWidth="1.600" /><circle cx="12.500" cy="16.500" r="1.800" fill="currentColor" stroke="none" /></Line>
      <Line w={25} h={20} vb="0 0 25 20" className="ml-[11px]"><path d="M1 7v6h4l6 5V2L5 7zM14.500 6.500q3 3.500 0 7M17.500 4q5 6 0 12M20.500 1.500q7 8.500 0 17" /></Line>
      <Line w={25} h={20} vb="0 0 25 20" className="ml-[11px]"><rect x="1.500" y="5" width="19.500" height="13" rx="3" /><path d="M23 9.500v4" strokeWidth="3" /><path d="M4 16V12l7-5v9z" fill="currentColor" /><path d="M5.500 0L2 7h3l-2 5 6-7H6z" fill="currentColor" stroke="#e3eef8" strokeWidth="1" /></Line>
      <div className="ml-[21px] w-[96px] text-right text-[17.500px] leading-[24px] whitespace-nowrap"><div>12:01 PM</div><div className="tracking-[0.150px]">27-11-2023</div></div>
      <Art w={20} h={23} vb="0 0 20 23" className="mr-[32px] ml-[13px]"><path d="M10 0q8 0 8 8v6l2 3.500v1H0v-1L2 14V8q0-8 8-8zM6.500 20h7q-1 3-3.500 3t-3.500-3z" fill="#003f92" /></Art>
    </div>
  );
}

export default function App() {
  return (
    <div className="flex h-[1080px] w-[1920px] flex-col overflow-hidden bg-[#f7f7f7]">
      <TabStrip />
      <Toolbar />
      <div className="flex h-[902px] shrink-0">
        <div className="flex w-[1852px] shrink-0 flex-col">
          <Bookmarks />
          <div className="ml-[5px] flex h-[848px] w-[1850px] shrink-0 overflow-hidden rounded-[14px] border border-[#e4e6ea] bg-[#fcfcfc] shadow-[0_1px_2px_rgba(0,0,0,0.15)]">
            <WebPage />
            <Scrollbar />
          </div>
        </div>
        <SideBar />
      </div>
      <Taskbar />
    </div>
  );
}
